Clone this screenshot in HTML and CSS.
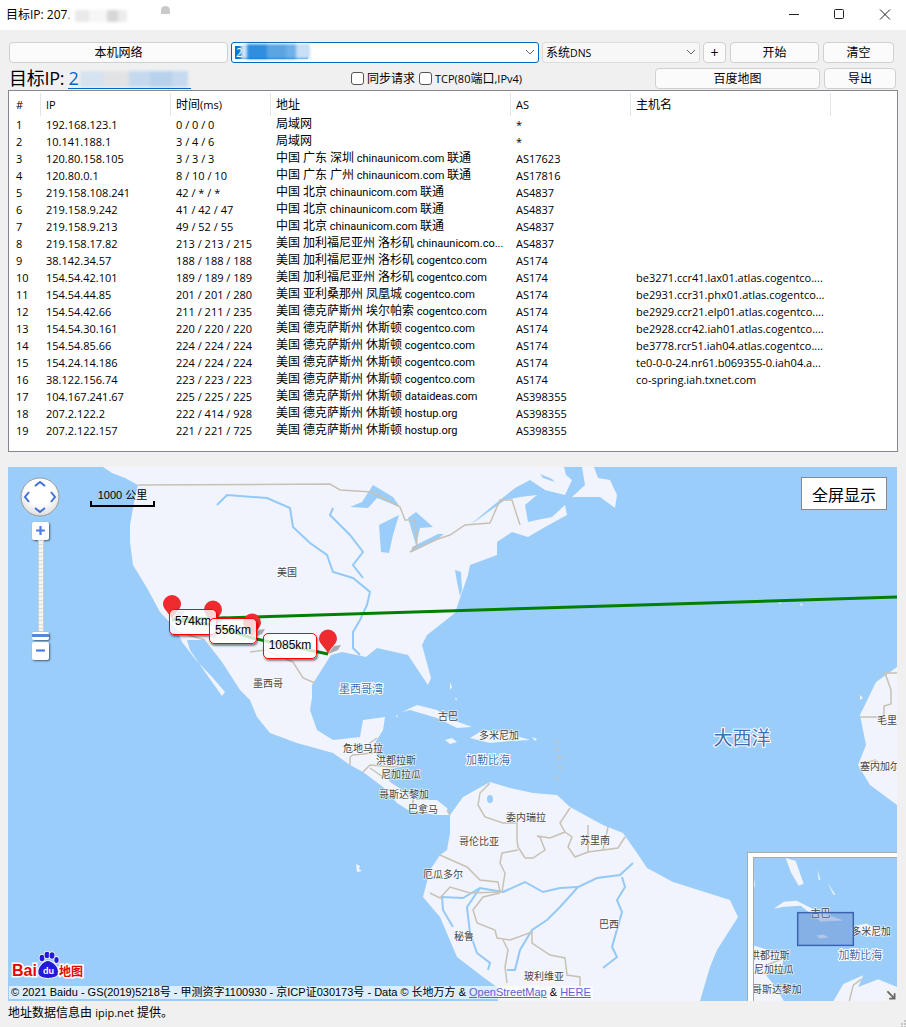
FILE: index.html
```html
<!DOCTYPE html>
<html lang="zh">
<head>
<meta charset="utf-8">
<title>目标IP</title>
<link rel="stylesheet" href="styles.css">
</head>
<body>
<div class="app">
  <header class="titlebar">
    <div class="title">目标IP: 207.<span class="blur blur-title"></span><span class="blur blur-dot"></span></div>
    <div class="winctl">
      <svg class="winbtn" viewBox="0 0 46 30"><path d="M21 14.500h10" /></svg>
      <svg class="winbtn" viewBox="0 0 46 30"><rect x="20.500" y="9.500" width="9" height="9" rx="1" /></svg>
      <svg class="winbtn" viewBox="0 0 46 30"><path d="M20 9.500l10 10M30 9.500l-10 10" /></svg>
    </div>
  </header>

  <main class="content">
    <div class="row-one">
      <button class="btn">本机网络</button>
      <div class="combo combo-active"><span class="selected">2</span><span class="blur blur-select"></span>
        <svg class="chev" viewBox="0 0 10 6"><path d="M1 1l4 4 4-4" /></svg></div>
      <div class="combo"><span class="combo-text">系统<small>DNS</small></span>
        <svg class="chev" viewBox="0 0 10 6"><path d="M1 1l4 4 4-4" /></svg></div>
      <button class="btn btn-plus">+</button>
      <button class="btn btn-shift">开始</button>
      <button class="btn btn-shift">清空</button>
    </div>

    <div class="row-two">
      <div class="target">目标IP: <a class="ip-link" href="#">2<span class="blur blur-link"></span></a></div>
      <label class="check"><input type="checkbox">同步请求</label>
      <label class="check"><input type="checkbox"><small>TCP(80</small>端口<small>,IPv4)</small></label>
      <button class="btn btn-map">百度地图</button>
      <button class="btn btn-export">导出</button>
    </div>

    <section class="grid-box">
      <table class="trace">
        <colgroup>
          <col class="c-n"><col class="c-ip"><col class="c-t"><col class="c-a"><col class="c-as"><col class="c-h"><col>
        </colgroup>
        <thead>
          <tr><th>#</th><th>IP</th><th>时间<small>(ms)</small></th><th>地址</th><th><small>AS</small></th><th>主机名</th><th></th></tr>
        </thead>
        <tbody>
          <tr><td>1</td><td>192.168.123.1</td><td>0 / 0 / 0</td><td><b>局域网</b></td><td>*</td><td></td><td></td></tr>
          <tr><td>2</td><td>10.141.188.1</td><td>3 / 4 / 6</td><td><b>局域网</b></td><td>*</td><td></td><td></td></tr>
          <tr><td>3</td><td>120.80.158.105</td><td>3 / 3 / 3</td><td><b>中国 广东 深圳</b> chinaunicom.com <b>联通</b></td><td>AS17623</td><td></td><td></td></tr>
          <tr><td>4</td><td>120.80.0.1</td><td>8 / 10 / 10</td><td><b>中国 广东 广州</b> chinaunicom.com <b>联通</b></td><td>AS17816</td><td></td><td></td></tr>
          <tr><td>5</td><td>219.158.108.241</td><td>42 / * / *</td><td><b>中国 北京</b> chinaunicom.com <b>联通</b></td><td>AS4837</td><td></td><td></td></tr>
          <tr><td>6</td><td>219.158.9.242</td><td>41 / 42 / 47</td><td><b>中国 北京</b> chinaunicom.com <b>联通</b></td><td>AS4837</td><td></td><td></td></tr>
          <tr><td>7</td><td>219.158.9.213</td><td>49 / 52 / 55</td><td><b>中国 北京</b> chinaunicom.com <b>联通</b></td><td>AS4837</td><td></td><td></td></tr>
          <tr><td>8</td><td>219.158.17.82</td><td>213 / 213 / 215</td><td><b>美国 加利福尼亚州 洛杉矶</b> chinaunicom.co...</td><td>AS4837</td><td></td><td></td></tr>
          <tr><td>9</td><td>38.142.34.57</td><td>188 / 188 / 188</td><td><b>美国 加利福尼亚州 洛杉矶</b> cogentco.com</td><td>AS174</td><td></td><td></td></tr>
          <tr><td>10</td><td>154.54.42.101</td><td>189 / 189 / 189</td><td><b>美国 加利福尼亚州 洛杉矶</b> cogentco.com</td><td>AS174</td><td>be3271.ccr41.lax01.atlas.cogentco....</td><td></td></tr>
          <tr><td>11</td><td>154.54.44.85</td><td>201 / 201 / 280</td><td><b>美国 亚利桑那州 凤凰城</b> cogentco.com</td><td>AS174</td><td>be2931.ccr31.phx01.atlas.cogentco...</td><td></td></tr>
          <tr><td>12</td><td>154.54.42.66</td><td>211 / 211 / 235</td><td><b>美国 德克萨斯州 埃尔帕索</b> cogentco.com</td><td>AS174</td><td>be2929.ccr21.elp01.atlas.cogentco....</td><td></td></tr>
          <tr><td>13</td><td>154.54.30.161</td><td>220 / 220 / 220</td><td><b>美国 德克萨斯州 休斯顿</b> cogentco.com</td><td>AS174</td><td>be2928.ccr42.iah01.atlas.cogentco....</td><td></td></tr>
          <tr><td>14</td><td>154.54.85.66</td><td>224 / 224 / 224</td><td><b>美国 德克萨斯州 休斯顿</b> cogentco.com</td><td>AS174</td><td>be3778.rcr51.iah04.atlas.cogentco....</td><td></td></tr>
          <tr><td>15</td><td>154.24.14.186</td><td>224 / 224 / 224</td><td><b>美国 德克萨斯州 休斯顿</b> cogentco.com</td><td>AS174</td><td>te0-0-0-24.nr61.b069355-0.iah04.a...</td><td></td></tr>
          <tr><td>16</td><td>38.122.156.74</td><td>223 / 223 / 223</td><td><b>美国 德克萨斯州 休斯顿</b> cogentco.com</td><td>AS174</td><td>co-spring.iah.txnet.com</td><td></td></tr>
          <tr><td>17</td><td>104.167.241.67</td><td>225 / 225 / 225</td><td><b>美国 德克萨斯州 休斯顿</b> dataideas.com</td><td>AS398355</td><td></td><td></td></tr>
          <tr><td>18</td><td>207.2.122.2</td><td>222 / 414 / 928</td><td><b>美国 德克萨斯州 休斯顿</b> hostup.org</td><td>AS398355</td><td></td><td></td></tr>
          <tr><td>19</td><td>207.2.122.157</td><td>221 / 221 / 725</td><td><b>美国 德克萨斯州 休斯顿</b> hostup.org</td><td>AS398355</td><td></td><td></td></tr>
        </tbody>
      </table>
    </section>

    <section class="map">
      <svg class="map-canvas" viewBox="8 467 889 534">
        <defs>
          <radialGradient id="disc" cx=".5" cy=".35" r=".7">
            <stop offset=".5" stop-color="#fff"/>
            <stop offset="1" stop-color="#d8d8d8"/>
          </radialGradient>
          <g id="pin">
            <path class="pin-shadow" d="M0 0L6-8 13-9 10-4Z"/>
            <path class="pin-body" d="M0 0C-2-6-9-10-9-15.500A9 9 0 1 1 9-15.500C9-10 2-6 0 0Z"/>
          </g>
        </defs>
        <g class="land">
          <path d="M103 467L112 473 125 478 138 485 135 497 133 508 130 525 130 542 133 565 147 588 160 612 177 630 182 642 196 660 213 678 225 692 222 696 205 672 190 650 187 640 205 640 222 662 240 690 250 700 257 717 270 733 297 743 333 753 350 765 363 772 383 787 397 803 408 810 423 813 437 815 450 815 447 808 437 800 417 800 407 793 390 782 385 770 410 765 377 757 375 743 383 730 385 717 363 720 360 737 333 740 317 730 310 710 312 698 312 685 331 655 342 652 366 657 377 648 408 655 418 670 428 685 431 678 422 645 427 635 455 613 460 598 468 575 470 565 497 555 497 542 512 532 528 537 545 527 567 515 565 505 552 517 537 520 528 522 525 505 537 495 520 497 505 500 480 518 470 525 490 508 515 488 530 480 545 490 565 495 572 480 566 475 564 467Z"/>
          <path d="M582 467L594 467 598 478 610 480 617 495 615 508 600 497 572 497 585 485Z"/>
          <path d="M450 815L450 833 447 850 440 855 430 870 423 897 440 917 457 957 483 977 497 987 498 1001 700 1001 710 967 717 950 738 917 730 900 673 882 647 868 637 853 623 833 603 825 570 807 557 795 533 793 510 788 490 782 463 797Z"/>
          <path d="M897 667L876 682 860 715 866 745 858 765 870 785 897 805Z"/>
          <path d="M402 712L417 705 437 710 453 720 472 727 457 728 437 718 410 710Z"/>
          <path d="M470 738L483 730 503 732 530 740 510 741 490 743Z"/>
          <path d="M445 740L452 738 457 742 450 744Z"/>
          <path d="M532 737L537 739 535 741Z"/>
          <path d="M450 682l2 5-2 3zM455 697l2 2-1 2zM396 715l2 1-1 2z"/>
          <path d="M356 864l4 2-1 3 3 2-5 1z"/>
          <path d="M778 602l4 1-2 1zM800 603l3 2-2 1zM860 695l3 3-3 2zM875 698l4 2-2 3zM882 695l3-5-1 5z"/>
        </g>
        <g class="water">
          <path d="M350 507L362 502 373 485 393 497 400 507 377 498 368 508Z"/>
          <path d="M379 525L399 515 393 535 389 553 381 552Z"/>
          <path d="M416 512L433 527 420 528 416 545 408 518Z"/>
          <path d="M412 552L435 541 444 534 438 534 412 547Z"/>
          <path d="M540 474l12 5 3 3-12-4z"/>
          <path d="M455 570l2 12 3 14 2-6-1-18z"/>
        </g>
        <g class="rivers">
          <path d="M217 505L227 495 267 498 290 508 293 527 310 543 327 555 333 572 353 578 370 592 367 605 360 620 353 632 353 648 360 655"/>
          <path d="M333 508L330 515 350 535 363 552 353 565 363 578"/>
          <path d="M633 863L620 875 597 878 578 887 560 907 547 920 532 930 520 950 515 970 507 970"/>
          <path d="M578 887L560 888 543 892 525 882 503 892 480 888 463 898 442 897 443 910 453 927"/>
          <path d="M480 888L467 907 470 933 477 953 490 963 488 970"/>
          <path d="M622 877L625 887 617 900 622 912 612 947 617 957 603 968"/>
        </g>
        <ellipse class="lake" cx="490" cy="799" rx="3" ry="4"/>
        <g class="borders">
          <path d="M138 485L330 484 340 490 372 492 400 507 405 520 415 520 417 545 410 552 435 540 450 535 465 525 490 523 500 500 512 500 520 525"/>
          <path d="M178 632L205 640M250 652L265 650 293 662 303 678 315 683"/>
          <path d="M897 673L885 673 891 690 891 704 884 706 884 717 860 717"/>
          <path d="M862 764L875 760 885 768 897 768"/>
          <path d="M350 757L353 755 372 753 370 743 377 738M350 757L350 765M363 772L370 765 393 767 410 763M370 768L383 777M413 798L413 807M450 815L447 810"/>
          <path d="M490 783L480 793 478 805 485 817 503 823 517 823 517 840 518 847 525 858 533 858 545 850 540 837 537 836 550 838 565 832 560 823 570 808"/>
          <path d="M565 832L572 837 568 847 575 857 588 852 603 850 618 848 625 837M588 825L588 852M608 827L603 850"/>
          <path d="M518 850L502 853 500 863 505 873 502 892"/>
          <path d="M440 855L467 867 480 880 498 882 500 892 470 893 450 887 440 898 430 893"/>
          <path d="M500 893L483 897 473 910 477 923 495 930 497 938 510 940 532 932 532 943 550 955 565 958 567 975 580 977 580 987"/>
          <path d="M503 940L508 950 505 967 507 983"/>
          <path d="M555 741l3 2M556 749l3 1M557 757l4 1 -3 2M558 767l4 1M556 778l4 1"/>
        </g>
        <g class="routes">
          <path d="M172 619.500L897 597"/>
          <path d="M172 619.500L213 625 252 638 328 654"/>
        </g>
        <g class="labels">
          <text x="287" y="571">美国</text>
          <text x="268" y="682">墨西哥</text>
          <text x="448" y="715">古巴</text>
          <text x="499" y="734">多米尼加</text>
          <text x="363" y="747">危地马拉</text>
          <text x="396" y="759">洪都拉斯</text>
          <text x="401" y="773">尼加拉瓜</text>
          <text x="404" y="793">哥斯达黎加</text>
          <text x="423" y="808">巴拿马</text>
          <text x="526" y="816">委内瑞拉</text>
          <text x="595" y="839">苏里南</text>
          <text x="479" y="840">哥伦比亚</text>
          <text x="443" y="873">厄瓜多尔</text>
          <text x="609" y="923">巴西</text>
          <text x="464" y="935">秘鲁</text>
          <text x="544" y="975">玻利维亚</text>
          <text x="887" y="719">毛里</text>
          <text x="880" y="765">塞内加尔</text>
        </g>
        <g class="labels labels-sea">
          <text x="361" y="688">墨西哥湾</text>
          <text x="488" y="759">加勒比海</text>
          <text class="ocean" x="742" y="736">大西洋</text>
        </g>
        <g class="pins">
          <g transform="translate(172 619.500)"><use href="#pin"/></g>
          <g transform="translate(213 625)"><use href="#pin"/></g>
          <g transform="translate(252 638)"><use href="#pin"/></g>
          <g transform="translate(328 654)"><use href="#pin"/></g>
        </g>
        <g class="logo">
          <text class="logo-bai" x="12" y="976">Bai</text>
          <g class="paw">
            <ellipse cx="42" cy="958" rx="2.500" ry="3.200"/>
            <ellipse cx="47" cy="955" rx="2.500" ry="3.200"/>
            <ellipse cx="52" cy="955.500" rx="2.500" ry="3.200"/>
            <ellipse cx="56.500" cy="960" rx="2.200" ry="3"/>
            <path d="M39 975C36 968 44 961 48 961S60 968 58 974C56 979 42 979 39 975Z"/>
          </g>
          <text class="logo-du" x="48.500" y="974">du</text>
          <text class="logo-map" x="59" y="976">地图</text>
        </g>
      </svg>

      <div class="dist dist-a">574km</div>
      <div class="dist dist-b">556km</div>
      <div class="dist dist-c">1085km</div>

      <div class="nav">
        <svg viewBox="0 0 40 40">
          <circle class="nav-disc" cx="20" cy="20" r="19"/>
          <path class="nav-arrow" d="M15 9l5-4 5 4M9 15l-4 5 4 5M31 15l4 5-4 5M15 31l5 4 5-4"/>
        </svg>
      </div>
      <div class="zoom">
        <div class="zoom-btn"><svg viewBox="0 0 10 10"><path d="M5 1v8M1 5h8"/></svg></div>
        <div class="zoom-track"></div>
        <div class="zoom-handle"></div>
        <div class="zoom-btn zoom-minus"><svg viewBox="0 0 10 10"><path d="M1 5h8"/></svg></div>
      </div>

      <div class="scale">1000 公里</div>
      <button class="fullscreen">全屏显示</button>

      <div class="copyright">© 2021 Baidu - GS(2019)5218号 - 甲测资字1100930 - 京ICP证030173号 - Data © 长地万方 &amp; <a href="#">OpenStreetMap</a> &amp; <a href="#">HERE</a></div>

      <div class="overview">
        <svg viewBox="0 0 144 144">
          <g class="land">
            <path d="M32 0L42 3 50 26 45 28 37 14Z"/>
            <path d="M20 51L30 44 43 43 63 53 90 63 67 64 47 48 30 49Z"/>
            <path d="M100 69L113 66 137 78 113 79Z"/>
            <path d="M63 78L70 77 75 80 66 81Z"/>
            <path d="M0 88L30 98 28 112 12 118 22 130 30 144 0 144Z"/>
            <path d="M80 144L90 127 110 118 105 130 125 122 144 130 144 144Z"/>
            <path d="M0 20l1 8-1 2zM64 12l3 10-2 0zM74 25l8 12-2 0z"/>
          </g>
          <g class="borders"><path d="M12 108L28 102M96 144L100 128 108 122"/></g>
          <g class="labels labels-small">
            <text x="67" y="55">古巴</text>
            <text x="118" y="73">多米尼加</text>
            <text x="16" y="97">洪都拉斯</text>
            <text x="20" y="111">尼加拉瓜</text>
            <text x="23" y="131">哥斯达黎加</text>
          </g>
          <g class="labels labels-sea labels-small"><text x="107" y="97">加勒比海</text></g>
          <rect class="viewport" x="44" y="55" width="56" height="33"/>
        </svg>
        <div class="overview-toggle"><svg viewBox="0 0 10 10"><path d="M2 2l6 6M8 3.500V8H3.500"/></svg></div>
      </div>
    </section>
  </main>

  <footer class="status">
    <span>地址数据信息由 <small>ipip.net</small> 提供。</span>
    <svg class="grip" viewBox="0 0 6 7"><path d="M4 0h2v2H4zM1 3h2v2H1zM4 3h2v2H4zM1 6h2v1H1zM4 6h2v1H4z"/></svg>
  </footer>
</div>
</body>
</html>
```

FILE: styles.css
```css
* { box-sizing: border-box; }

html, body {
  margin: 0;
  padding: 0;
}

body {
  width: 906px;
  height: 1027px;
  overflow: hidden;
  background: #f0f0f0;
  color: #000;
  font: 12px "Open Sans", "Noto Sans CJK SC", sans-serif;
}

small { font-size: 11px; }

.app {
  display: flex;
  flex-direction: column;
  height: 100%;
}

/* Title bar */
.titlebar {
  display: flex;
  justify-content: space-between;
  height: 30px;
  background: #fff;
  flex: none;
}

.title {
  position: relative;
  padding: 6px 0 0 6px;
  line-height: 18px;
}

.blur {
  display: inline-block;
  filter: blur(1.5px);
}

.blur-title {
  width: 58px;
  height: 12px;
  margin-left: -2px;
  vertical-align: -3px;
  background: linear-gradient(90deg, #fff 0 10%, #e9e9e9 10% 35%, #f6f6f6 35% 65%, #d9d7d5 65% 85%, #ececec 85%);
}

.blur-dot {
  position: absolute;
  left: 161px;
  top: 6px;
  width: 9px;
  height: 8px;
  border-radius: 5px 5px 0 0;
  background: #c9c9c9;
  filter: none;
}

.winctl { display: flex; }

.winbtn {
  width: 46px;
  height: 30px;
  fill: none;
  stroke: #222;
  stroke-width: 1;
}

/* Toolbar */
.content {
  flex: none;
  padding: 12px 9px 0 8px;
}

.btn {
  height: 21px;
  padding: 1px 0 0;
  border: 1px solid #d0d0d0;
  border-radius: 4px;
  background: #fbfbfb;
  color: #000;
  font: 12px/18px "Open Sans", "Noto Sans CJK SC", sans-serif;
}

.btn-plus { font-size: 14px; }

.row-one {
  display: grid;
  grid-template-columns: 219px 308px 158px 23px 90px 72px;
  column-gap: 3px;
  height: 21px;
  margin-left: 1px;
}

.btn-shift { margin-left: 1px; }

.combo {
  position: relative;
  display: flex;
  align-items: center;
  height: 21px;
  padding-left: 3px;
  border: 1px solid #dcdcdc;
  border-radius: 3px;
  background: #f7f7f7;
}

.combo-active {
  border-color: #0067c0;
  background: #fff;
}

.combo-text { margin-top: -1px; }
.combo-text small { font-size: 10.500px; }

.selected {
  width: 73px;
  height: 13px;
  padding-left: 1px;
  background: #0078d7;
  color: #fff;
  font-size: 12px;
  line-height: 13px;
}

.blur-select {
  position: absolute;
  left: 9px;
  top: 1px;
  width: 69px;
  height: 15px;
  background: linear-gradient(90deg, #d5e7f8 0 8%, #2f8ede 8% 38%, #5ca5e3 38% 65%, #6fb0e8 65% 80%, #c8dff5 80%);
}

.chev {
  position: absolute;
  right: 3px;
  top: 6px;
  width: 10px;
  height: 6px;
  fill: none;
  stroke: #666;
  stroke-width: 1;
}

.row-two {
  display: flex;
  align-items: center;
  height: 24px;
  margin-top: 3px;
  margin-left: 1px;
  padding-right: 1px;
}

.target {
  width: 342px;
  font-size: 18px;
  letter-spacing: -.3px;
  line-height: 22px;
  white-space: nowrap;
}

.ip-link {
  display: inline-block;
  width: 123px;
  height: 22px;
  border-bottom: 1px solid #0066cc;
  color: #0066cc;
  text-decoration: none;
  overflow: hidden;
  vertical-align: top;
}

.blur-link {
  width: 108px;
  height: 16px;
  margin-left: 2px;
  vertical-align: -2px;
  background: linear-gradient(90deg, #d6e3f1 0 22%, #e1e3e5 22% 45%, #c5d9ee 45% 65%, #b8d2ec 65% 85%, #c6d9ee 85%);
}

.check {
  display: flex;
  align-items: center;
  margin-right: 4px;
  white-space: nowrap;
}

.check input {
  appearance: none;
  width: 13px;
  height: 13px;
  margin: 0 3px 0 0;
  border: 1px solid #555;
  border-radius: 3px;
  background: #fff;
}

.btn-map {
  width: 165px;
  margin-left: auto;
  height: 21px;
}

.btn-export {
  width: 72px;
  height: 21px;
  margin-left: 4px;
}

/* Trace table */
.grid-box {
  width: 890px;
  height: 362px;
  margin-top: 0;
  padding-top: 2px;
  border: 1px solid #828790;
  background: #fff;
}

.trace {
  width: 888px;
  table-layout: fixed;
  border-collapse: separate;
  border-spacing: 0;
  font-size: 11px;
}

.c-n { width: 31px; }
.c-ip { width: 130px; }
.c-t { width: 100px; }
.c-a { width: 240px; }
.c-as { width: 120px; }
.c-h { width: 200px; }

.trace th {
  height: 23px;
  padding: 0 0 1px 5px;
  border-left: 1px solid #e5e5e5;
  font-size: 12px;
  font-weight: 400;
  text-align: left;
}

.trace th:first-child {
  padding-left: 7px;
  border-left: 0;
  font-size: 11px;
}

.trace th:nth-child(2) { font-size: 11px; }
.trace th:last-child { border-left: 1px solid #e5e5e5; }

.trace td {
  height: 17px;
  padding: 0 0 0 6px;
  line-height: 17px;
  white-space: nowrap;
  overflow: hidden;
}

.trace td:first-child { padding-left: 7px; }

.trace td:nth-child(4) {
  font-family: Roboto, "Noto Sans CJK SC", sans-serif;
}

.trace b {
  font-size: 12px;
  font-weight: 400;
}

/* Map */
.map {
  position: relative;
  width: 889px;
  height: 534px;
  margin-top: 15px;
  overflow: hidden;
  background: #9bcdfa;
}

.map-canvas {
  display: block;
  width: 889px;
  height: 534px;
}

.land path { fill: #f1f4fc; }
.water path { fill: #9bcdfa; }
.lake { fill: #9bcdfa; }

.rivers path {
  fill: none;
  stroke: #93c9f8;
  stroke-width: 2;
}

.borders path {
  fill: none;
  stroke: #c8c1b5;
  stroke-width: 1.500;
}

.routes path {
  fill: none;
  stroke: #008000;
  stroke-width: 3;
}

.labels text {
  fill: #444;
  font: 10px "Noto Sans CJK SC", sans-serif;
  text-anchor: middle;
  dominant-baseline: central;
  paint-order: stroke;
  stroke: #fff;
  stroke-width: 1.500px;
  stroke-opacity: .7;
}

.labels-sea text {
  fill: #3d6fb0;
  font-size: 11px;
  stroke-opacity: 1;
  stroke-width: 2px;
}

.labels-sea .ocean { font-size: 19px; }
.labels-small text { font-size: 10px; }
.labels-sea.labels-small text { font-size: 11px; }

.pin-body { fill: #ee2c30; }
.pin-shadow { fill: rgba(60, 60, 60, .4); }

.logo-bai {
  fill: #e10601;
  font: 700 16px "Liberation Sans", sans-serif;
  paint-order: stroke;
  stroke: #fff;
  stroke-width: 3px;
}

.paw {
  fill: #2319dc;
  stroke: #fff;
  stroke-width: 1.500px;
  paint-order: stroke;
}

.logo-du {
  fill: #fff;
  font: 700 9px "Liberation Sans", sans-serif;
  text-anchor: middle;
}

.logo-map {
  fill: #e10601;
  font: 700 12px "Noto Sans CJK SC", sans-serif;
  paint-order: stroke;
  stroke: #fff;
  stroke-width: 3px;
}

.dist {
  position: absolute;
  height: 26px;
  border: 1.500px solid #f00;
  border-radius: 5px;
  background: rgba(255, 255, 255, .8);
  box-shadow: 1px 2px 2px rgba(0, 0, 0, .45);
  font: 12px/23px "Liberation Sans", sans-serif;
  text-align: center;
}

.dist-a { left: 161px; top: 142px; width: 48px; }
.dist-b { left: 201px; top: 151px; width: 48px; }
.dist-c { left: 255px; top: 166px; width: 54px; }

.nav {
  position: absolute;
  left: 12px;
  top: 10px;
  width: 40px;
  height: 40px;
}

.nav svg { display: block; }

.nav-disc {
  fill: url(#disc);
  stroke: #999;
  stroke-width: 1;
}

.nav-arrow {
  fill: none;
  stroke: #3e70d8;
  stroke-width: 2;
}

.zoom {
  position: absolute;
  left: 24px;
  top: 55px;
  display: flex;
  flex-direction: column;
  align-items: center;
  width: 17px;
}

.zoom-btn {
  width: 17px;
  height: 18px;
  padding: 3px;
  border-radius: 2px;
  background: #fff;
  box-shadow: 1px 1px 2px rgba(0, 0, 0, .55);
}

.zoom-btn svg {
  display: block;
  fill: none;
  stroke: #4d7be0;
  stroke-width: 2;
}

.zoom-track {
  width: 6px;
  height: 92px;
  border: 1px solid #ccc;
  background: repeating-linear-gradient(#f4f4f4 0 3px, #ddd 3px 4px);
}

.zoom-handle {
  position: relative;
  width: 17px;
  height: 8px;
  border-radius: 2px;
  background: linear-gradient(#fff 0 2px, #5c84dd 2px 5px, #fff 5px);
  box-shadow: 1px 1px 2px rgba(0, 0, 0, .55);
}

.zoom-minus { margin-top: 2px; }

.scale {
  position: absolute;
  left: 82px;
  top: 21px;
  width: 65px;
  height: 19px;
  border: 2px solid #000;
  border-top: 0;
  border-image: linear-gradient(transparent 0 70%, #000 70%) 2;
  font: 700 10px/15px "Liberation Sans", "Noto Sans CJK SC", sans-serif;
  font-weight: 400;
  font-size: 11px;
  text-align: center;
  white-space: nowrap;
}

.fullscreen {
  position: absolute;
  left: 793px;
  top: 10px;
  width: 86px;
  height: 33px;
  padding: 0;
  border: 1px solid #888;
  background: #fff;
  font: 16px "Noto Sans CJK SC", sans-serif;
}

.copyright {
  position: absolute;
  left: 1px;
  top: 519px;
  height: 13px;
  padding: 0 2px;
  background: rgba(255, 255, 255, .65);
  font: 11px/13px "Liberation Sans", "Noto Sans CJK SC", sans-serif;
  white-space: nowrap;
}

.copyright a { color: #6060d0; }

.overview {
  position: absolute;
  right: 0;
  bottom: 0;
  width: 150px;
  height: 149px;
  padding: 5px 0 0 6px;
  border-top: 1px solid #aaa;
  border-left: 1px solid #aaa;
  background: #fff;
}

.overview svg { display: block; }

.overview > svg {
  width: 143px;
  height: 143px;
  background: #9bcdfa;
  outline: 1px solid #aaa;
}

.viewport {
  fill: rgba(106, 142, 203, .45);
  stroke: #3b64b0;
  stroke-width: 1.500;
}

.overview-toggle {
  position: absolute;
  right: 0;
  bottom: 0;
  width: 12px;
  height: 12px;
  background: #f2f2f2;
}

.overview-toggle svg {
  fill: none;
  stroke: #666;
  stroke-width: 1.500;
}

/* Status bar */
.status {
  position: relative;
  flex: 1;
  padding: 3px 0 0 8px;
  line-height: 17px;
}

.grip {
  position: absolute;
  right: 0;
  bottom: 0;
  width: 6px;
  height: 7px;
  fill: #c4c4c4;
}
```
